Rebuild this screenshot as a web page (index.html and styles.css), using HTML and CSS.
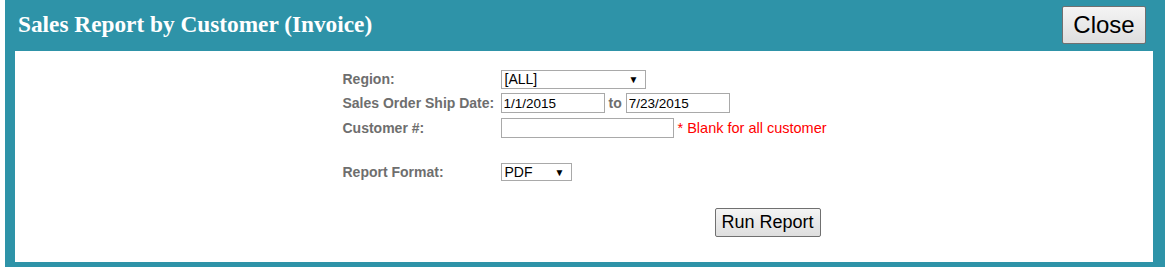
FILE: index.html
```html
<!DOCTYPE html>
<html>
<head>
<meta charset="utf-8">
<link rel="stylesheet" href="styles.css">
</head>
<body>
<div class="dialog">
  <div class="header">
    <h1 class="title">Sales Report by Customer (Invoice)</h1>
    <button class="btn btn-close" type="button">Close</button>
  </div>
  <div class="content">
    <div class="form">
      <div class="row">
        <span class="label">Region:</span>
        <span class="select select-region"><span>[ALL]</span><span class="arrow">&#9660;</span></span>
      </div>
      <div class="row">
        <span class="label">Sales Order Ship Date:</span>
        <input class="input input-date" type="text" value="1/1/2015">
        <span class="to">to</span>
        <input class="input input-date" type="text" value="7/23/2015">
      </div>
      <div class="row row-tall">
        <span class="label">Customer #:</span>
        <input class="input input-cust" type="text" value="">
        <span class="hint">* Blank for all customer</span>
      </div>
      <div class="row row-format">
        <span class="label">Report Format:</span>
        <span class="select select-format"><span>PDF</span><span class="arrow">&#9660;</span></span>
      </div>
      <div class="actions">
        <button class="btn btn-run" type="button">Run Report</button>
      </div>
    </div>
  </div>
</div>
</body>
</html>
```
FILE: styles.css
```css
html, body {
  margin: 0;
  padding: 0;
  background: #ffffff;
}
body {
  padding: 0 4px 0 5px;
  font-family: "Liberation Sans", Arial, sans-serif;
}
.dialog {
  background: #2e93a8;
  padding: 0 12px 5px 10px;
  height: 262px;
}
.header {
  height: 51px;
  display: flex;
  align-items: center;
  justify-content: space-between;
  padding-left: 3px;
  padding-right: 7px;
}
.title {
  margin: 0;
  color: #ffffff;
  font-family: "Liberation Serif", "Times New Roman", serif;
  font-weight: bold;
  font-size: 23.3px;
  margin-top: -3px;
}
.btn {
  font-family: "Liberation Sans", Arial, sans-serif;
  color: #000;
  background: linear-gradient(#f4f4f4, #dedede);
  border: 1px solid #707070;
  border-radius: 2px;
  padding: 0;
  cursor: pointer;
}
.btn-close {
  width: 84px;
  height: 38px;
  font-size: 24px;
  margin-top: -2px;
}
.content {
  background: #ffffff;
  height: 211px;
  box-sizing: border-box;
  padding-top: 16px;
}
.form {
  width: 483px;
  margin: 0 auto;
  font-size: 14px;
}
.row {
  display: flex;
  align-items: center;
  height: 24px;
  white-space: nowrap;
}
.row-tall {
  height: 25px;
}
.row-format {
  margin-top: 20px;
}
.label {
  width: 158px;
  flex: none;
  font-weight: bold;
  color: #6e6e6e;
  font-size: 14px;
}
.select {
  box-sizing: border-box;
  display: flex;
  align-items: center;
  justify-content: space-between;
  border: 1px solid #a9a9a9;
  background: #fff;
  font-size: 14px;
  color: #000;
  padding: 0 6px 0 3px;
  height: 19px;
  flex: none;
}
.select-region {
  width: 145px;
}
.select-format {
  width: 71px;
  height: 18px;
}
.arrow {
  font-size: 10px;
}
.input {
  box-sizing: border-box;
  height: 20px;
  border: 1px solid #a9a9a9;
  font-family: "Liberation Sans", Arial, sans-serif;
  font-size: 13.5px;
  padding: 0 2px;
  margin: 0;
  color: #000;
  background: #fff;
  flex: none;
}
.input-date {
  width: 104px;
}
.input-cust {
  width: 173px;
}
.to {
  font-weight: bold;
  color: #6e6e6e;
  margin: 0 4px 0 4px;
  flex: none;
}
.hint {
  color: #ff0000;
  font-size: 14.5px;
  margin-left: 4px;
  flex: none;
}
.actions {
  padding-left: 372px;
  margin-top: 24px;
}
.btn-run {
  width: 106px;
  height: 29px;
  font-size: 18px;
}
```
